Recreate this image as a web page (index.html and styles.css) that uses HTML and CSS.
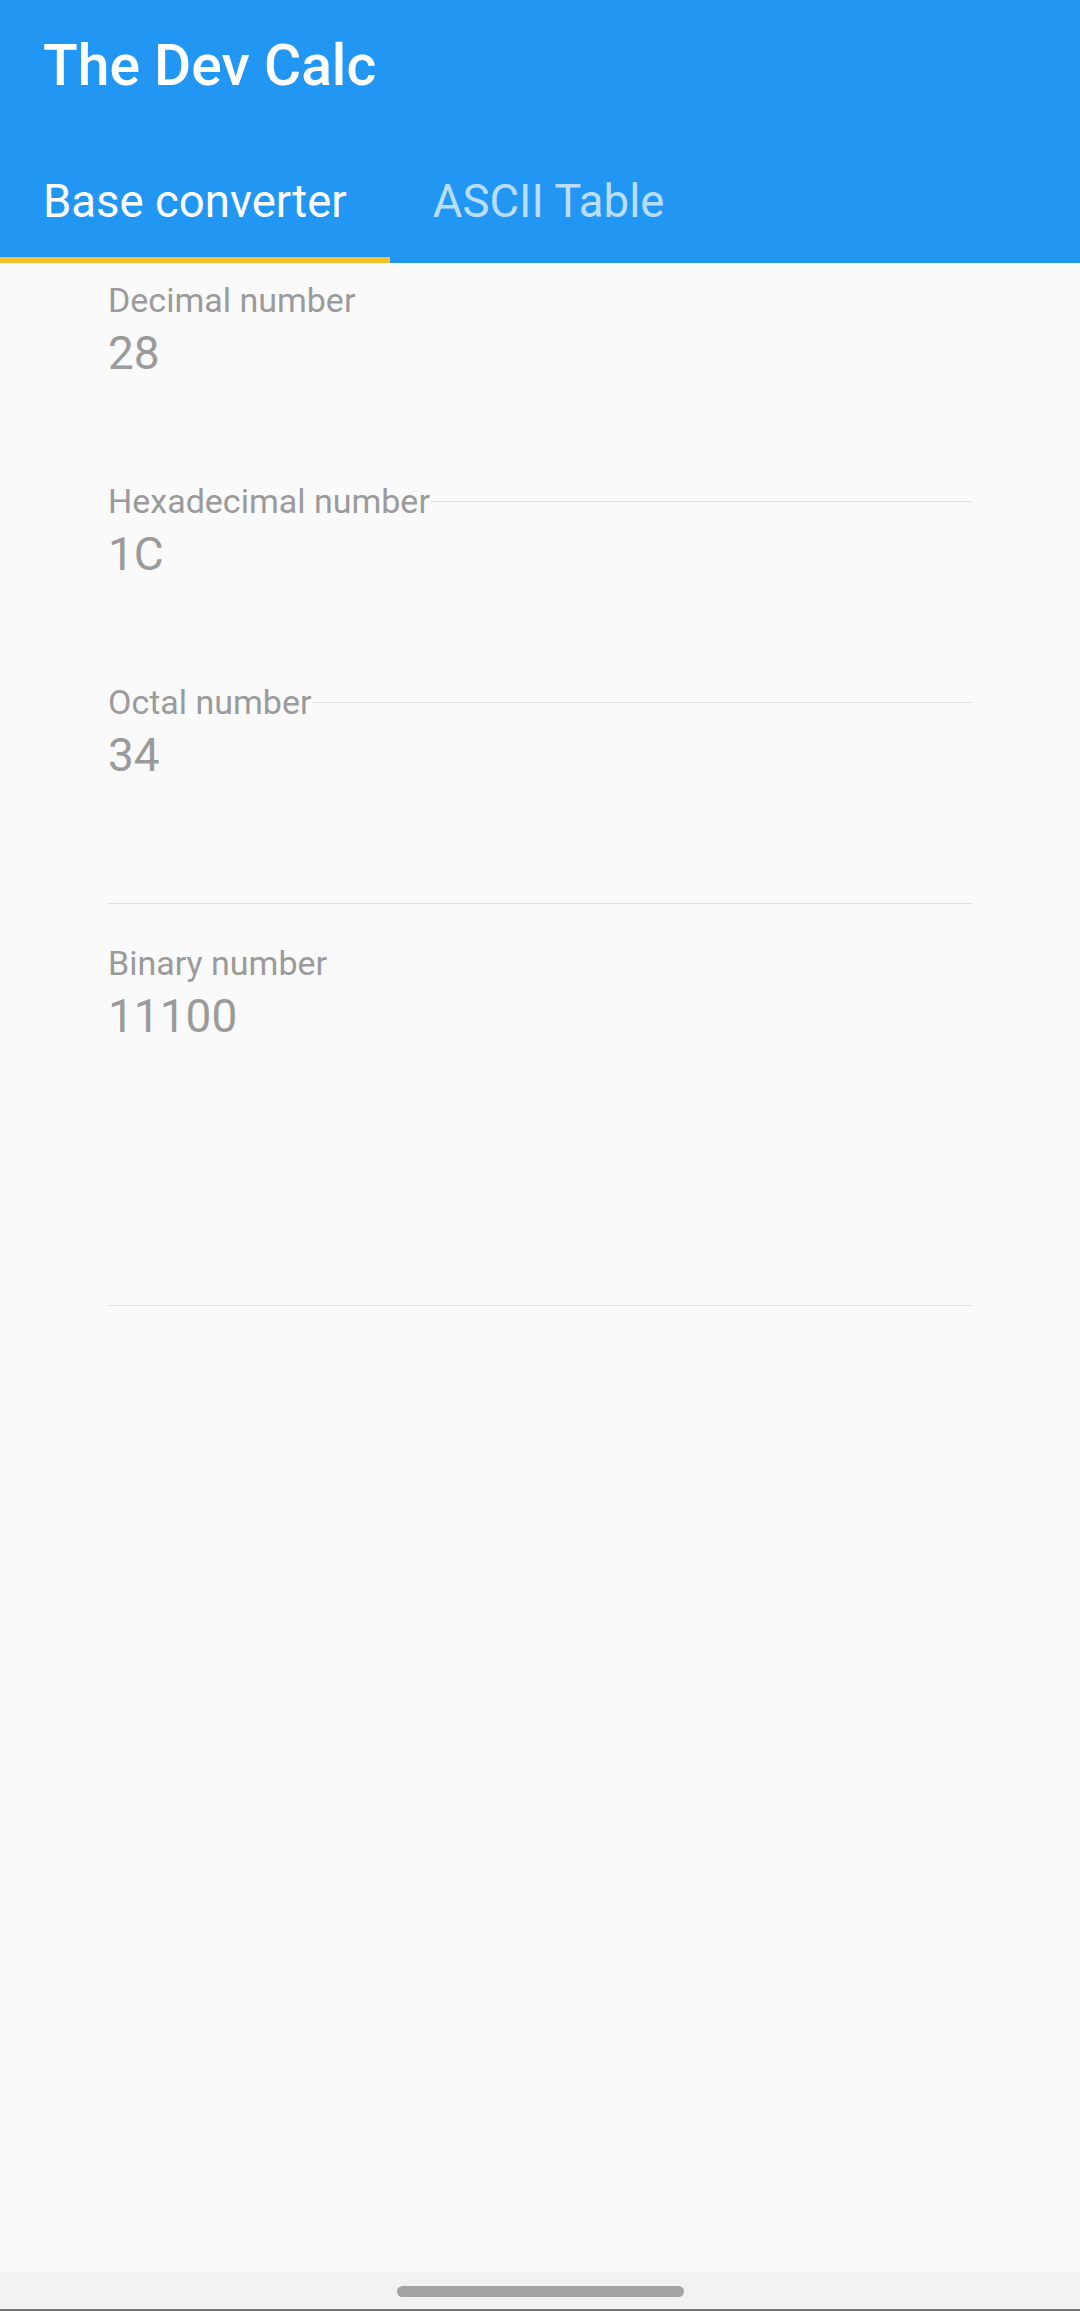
FILE: index.html
```html
<!DOCTYPE html>
<html lang="en">
<head>
<meta charset="utf-8">
<title>The Dev Calc</title>
<link rel="stylesheet" href="styles.css">
</head>
<body>
<div class="app">
  <header class="appbar">
    <div class="title">The Dev Calc</div>
    <nav class="tabs">
      <div class="tab active">Base converter</div>
      <div class="tab">ASCII Table</div>
    </nav>
  </header>
  <main class="content">
    <div class="field first">
      <div class="label-row"><span class="label">Decimal number</span></div>
      <div class="value">28</div>
    </div>
    <div class="field">
      <div class="label-row"><span class="label">Hexadecimal number</span><span class="rule"></span></div>
      <div class="value">1C</div>
    </div>
    <div class="field">
      <div class="label-row"><span class="label">Octal number</span><span class="rule"></span></div>
      <div class="value">34</div>
    </div>
    <div class="divider divider-a"></div>
    <div class="field binary">
      <div class="label-row"><span class="label">Binary number</span></div>
      <div class="value">11100</div>
    </div>
    <div class="divider divider-b"></div>
  </main>
  <footer class="navbar">
    <div class="handle"></div>
  </footer>
</div>
</body>
</html>
```
FILE: styles.css
```css
* { box-sizing: border-box; }
html, body { margin: 0; padding: 0; }
body {
  width: 1080px;
  height: 2311px;
  background: #fafafa;
  font-family: Roboto, "Noto Sans", "Liberation Sans", sans-serif;
  overflow: hidden;
}
.app {
  display: flex;
  flex-direction: column;
  height: 2311px;
}
.appbar {
  background: #2196f3;
  height: 263px;
  display: flex;
  flex-direction: column;
}
.title {
  color: #ffffff;
  font-weight: 500;
  font-size: 57px;
  line-height: 67px;
  padding: 32px 0 0 43px;
}
.tabs {
  margin-top: auto;
  display: flex;
  height: 130px;
}
.tab {
  padding: 42px 43px 0;
  font-size: 45.5px;
  line-height: 54px;
  color: rgba(255, 255, 255, 0.7);
  border-bottom: 6px solid transparent;
  white-space: nowrap;
}
.tab.active {
  color: #ffffff;
  border-bottom-color: #f7c02b;
}
.content {
  flex: 1;
  padding: 0 108px;
  display: flex;
  flex-direction: column;
}
.field {
  display: flex;
  flex-direction: column;
  margin-top: 102px;
}
.field.first { margin-top: 18px; }
.field.binary { margin-top: 40px; }
.label-row {
  display: flex;
  align-items: center;
  height: 39px;
}
.label {
  font-size: 34px;
  line-height: 39px;
  color: #9b9b9b;
  white-space: nowrap;
}
.rule {
  flex: 1;
  height: 1px;
  background: #e0e0e0;
}
.value {
  margin-top: 7px;
  font-size: 46px;
  line-height: 53px;
  color: #9b9b9b;
}
.divider {
  height: 1px;
  background: #e0e0e0;
}
.divider-a { margin-top: 121px; }
.divider-b { margin-top: 262px; }
.navbar {
  height: 39px;
  background: #f2f2f2;
  border-bottom: 2px solid #757575;
  display: flex;
  justify-content: center;
  padding-top: 14px;
}
.handle {
  width: 287px;
  height: 11px;
  border-radius: 6px;
  background: #a4a4a4;
}
```
